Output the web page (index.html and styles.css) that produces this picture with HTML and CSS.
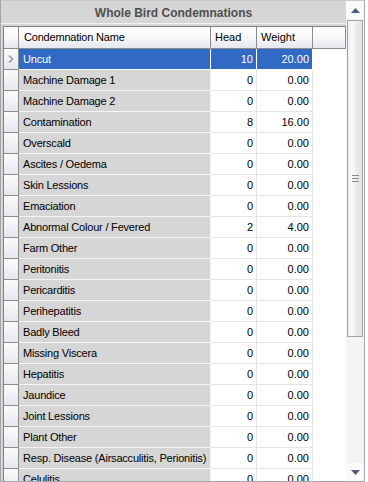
FILE: index.html
```html
<!DOCTYPE html>
<html>
<head>
<meta charset="utf-8">
<link rel="stylesheet" href="styles.css">
</head>
<body>
<div class="panel">
  <div class="main">
    <div class="title">Whole Bird Condemnations</div>
    <div class="grid">
      <div class="row head-row">
        <div class="sel"></div>
        <div class="cell name">Condemnation Name</div>
        <div class="cell num-h">Head</div>
        <div class="cell num-h">Weight</div>
        <div class="cell fill"></div>
      </div>
      <div class="row current">
        <div class="sel"><svg width="6" height="8" viewBox="0 0 6 8"><path d="M1 0.5 L4.5 4 L1 7.5" fill="none" stroke="#9a9a9a" stroke-width="1.6"/></svg></div>
        <div class="cell name">Uncut</div><div class="cell num">10</div><div class="cell num">20.00</div><div class="cell fill"></div>
      </div>
      <div class="row"><div class="sel"></div><div class="cell name">Machine Damage 1</div><div class="cell num">0</div><div class="cell num">0.00</div><div class="cell fill"></div></div>
      <div class="row"><div class="sel"></div><div class="cell name">Machine Damage 2</div><div class="cell num">0</div><div class="cell num">0.00</div><div class="cell fill"></div></div>
      <div class="row"><div class="sel"></div><div class="cell name">Contamination</div><div class="cell num">8</div><div class="cell num">16.00</div><div class="cell fill"></div></div>
      <div class="row"><div class="sel"></div><div class="cell name">Overscald</div><div class="cell num">0</div><div class="cell num">0.00</div><div class="cell fill"></div></div>
      <div class="row"><div class="sel"></div><div class="cell name">Ascites / Oedema</div><div class="cell num">0</div><div class="cell num">0.00</div><div class="cell fill"></div></div>
      <div class="row"><div class="sel"></div><div class="cell name">Skin Lessions</div><div class="cell num">0</div><div class="cell num">0.00</div><div class="cell fill"></div></div>
      <div class="row"><div class="sel"></div><div class="cell name">Emaciation</div><div class="cell num">0</div><div class="cell num">0.00</div><div class="cell fill"></div></div>
      <div class="row"><div class="sel"></div><div class="cell name">Abnormal Colour / Fevered</div><div class="cell num">2</div><div class="cell num">4.00</div><div class="cell fill"></div></div>
      <div class="row"><div class="sel"></div><div class="cell name">Farm Other</div><div class="cell num">0</div><div class="cell num">0.00</div><div class="cell fill"></div></div>
      <div class="row"><div class="sel"></div><div class="cell name">Peritonitis</div><div class="cell num">0</div><div class="cell num">0.00</div><div class="cell fill"></div></div>
      <div class="row"><div class="sel"></div><div class="cell name">Pericarditis</div><div class="cell num">0</div><div class="cell num">0.00</div><div class="cell fill"></div></div>
      <div class="row"><div class="sel"></div><div class="cell name">Perihepatitis</div><div class="cell num">0</div><div class="cell num">0.00</div><div class="cell fill"></div></div>
      <div class="row"><div class="sel"></div><div class="cell name">Badly Bleed</div><div class="cell num">0</div><div class="cell num">0.00</div><div class="cell fill"></div></div>
      <div class="row"><div class="sel"></div><div class="cell name">Missing Viscera</div><div class="cell num">0</div><div class="cell num">0.00</div><div class="cell fill"></div></div>
      <div class="row"><div class="sel"></div><div class="cell name">Hepatitis</div><div class="cell num">0</div><div class="cell num">0.00</div><div class="cell fill"></div></div>
      <div class="row"><div class="sel"></div><div class="cell name">Jaundice</div><div class="cell num">0</div><div class="cell num">0.00</div><div class="cell fill"></div></div>
      <div class="row"><div class="sel"></div><div class="cell name">Joint Lessions</div><div class="cell num">0</div><div class="cell num">0.00</div><div class="cell fill"></div></div>
      <div class="row"><div class="sel"></div><div class="cell name">Plant Other</div><div class="cell num">0</div><div class="cell num">0.00</div><div class="cell fill"></div></div>
      <div class="row"><div class="sel"></div><div class="cell name">Resp. Disease (Airsacculitis, Perionitis)</div><div class="cell num">0</div><div class="cell num">0.00</div><div class="cell fill"></div></div>
      <div class="row"><div class="sel"></div><div class="cell name">Celulitis</div><div class="cell num">0</div><div class="cell num">0.00</div><div class="cell fill"></div></div>
    </div>
  </div>
  <div class="scrollbar">
    <div class="sb-btn"><svg width="9" height="5" viewBox="0 0 9 5"><path d="M0 5 L4.5 0 L9 5 Z" fill="#4e5a76"/></svg></div>
    <div class="thumb"><div class="grip"></div></div>
    <div class="track"></div>
    <div class="sb-btn"><svg width="9" height="5" viewBox="0 0 9 5"><path d="M0 0 L9 0 L4.5 5 Z" fill="#4e5a76"/></svg></div>
  </div>
</div>
</body>
</html>
```

FILE: styles.css
```css
html, body {
  margin: 0;
  padding: 0;
  background: #ffffff;
}

body {
  font-family: "Liberation Sans", Arial, sans-serif;
  font-size: 11px;
  color: #000;
}

.panel {
  width: 363px;
  height: 480px;
  border: 1px solid #a6a6a6;
  border-top-color: #c8c8c8;
  display: flex;
  overflow: hidden;
  background-color: #d6d6d6;
  background-image: repeating-conic-gradient(#dadada 0 25%, #d2d2d2 0 50%);
  background-size: 2px 2px;
}

.main {
  width: 345px;
  display: flex;
  flex-direction: column;
  overflow: hidden;
}

.title {
  height: 22px;
  line-height: 25px;
  text-align: center;
  font-weight: bold;
  font-size: 12px;
  color: #4f4f4f;
  border-bottom: 1px solid #f2f2f2;
  flex: none;
}

.grid {
  margin: 2px 0 0 2px;
  border-left: 1px solid #7f7f7f;
  border-top: 1px solid #7f7f7f;
  flex: 1;
  overflow: hidden;
  background: #fff;
}

.row {
  display: grid;
  grid-template-columns: 15px 192px 46px 56px 33px;
  height: 21px;
}

.sel {
  border-right: 1px solid #8c8c8c;
  border-bottom: 1px solid #8c8c8c;
  background: linear-gradient(#fbfbfb, #e6e8ee);
  display: flex;
  align-items: center;
  justify-content: center;
  padding-right: 1px;
}

.cell {
  border-right: 1px solid #e4e4e4;
  border-bottom: 1px solid #e4e4e4;
  line-height: 20px;
  white-space: nowrap;
  overflow: hidden;
}

.name {
  padding-left: 4px;
  letter-spacing: -0.2px;
  background-color: #d6d6d6;
  background-image: repeating-conic-gradient(#dadada 0 25%, #d2d2d2 0 50%);
  background-size: 2px 2px;
  border-right-color: #f4f4f4;
  border-bottom-color: #f4f4f4;
}

.num {
  text-align: right;
  padding-right: 3px;
  background: #fff;
}

.fill {
  background: #fff;
  border-right: none;
  border-bottom: none;
}

.head-row {
  height: 22px;
}

.head-row .sel,
.head-row .cell {
  background: linear-gradient(#ffffff, #f4f5f8 60%, #e6e7ec);
  border-right: 1px solid #8c8c8c;
  border-bottom: 1px solid #8c8c8c;
  line-height: 21px;
}

.head-row .name {
  padding-left: 5px;
}

.num-h {
  padding-left: 4px;
}

.current .name,
.current .num {
  background: #316ac5;
  color: #fff;
  border-color: #ffffff;
}

.scrollbar {
  width: 18px;
  display: flex;
  flex-direction: column;
  background-color: #f6f6f6;
  background-image: repeating-conic-gradient(#f8f8f8 0 25%, #efefef 0 50%);
  background-size: 2px 2px;
}

.sb-btn {
  height: 18px;
  display: flex;
  align-items: center;
  justify-content: center;
  background: #fafafa;
  flex: none;
}

.thumb {
  margin: 1px 1px 0 1px;
  height: 315px;
  border: 1px solid #a3a3a3;
  background: linear-gradient(90deg, #eeeeee, #fafafa 30%, #ececec 60%, #e2e2e2);
  display: flex;
  align-items: center;
  justify-content: center;
  flex: none;
}

.grip {
  width: 7px;
  height: 5px;
  border-top: 1px solid #8a8a8a;
  border-bottom: 1px solid #8a8a8a;
  background: linear-gradient(transparent 2px, #8a8a8a 2px, #8a8a8a 3px, transparent 3px);
}

.track {
  flex: 1;
}
```
